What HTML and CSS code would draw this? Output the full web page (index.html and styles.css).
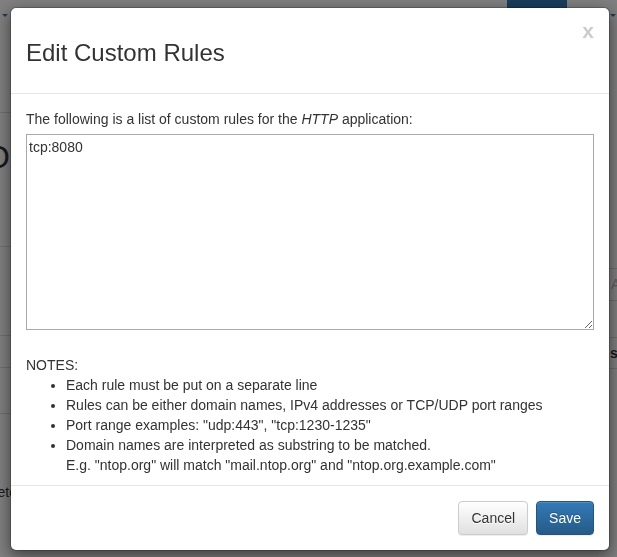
FILE: index.html
```html
<!DOCTYPE html>
<html lang="en">
<head>
<meta charset="utf-8">
<title>Edit Custom Rules</title>
<link rel="stylesheet" href="styles.css">
</head>
<body>
<div class="page">
  <div class="side side-left">
    <div class="blk l1"><span class="caret"></span></div>
    <div class="blk l2"><span class="big">O</span></div>
    <div class="blk l3"></div>
    <div class="blk l4"></div>
    <div class="blk l5"></div>
    <div class="l6">Complete</div>
  </div>
  <div class="middle">
    <div class="nav-btn"></div>
  </div>
  <div class="side side-right">
    <div class="blk r1"><span class="caret"></span></div>
    <div class="blk r2"><span class="ph">Ap</span></div>
    <div class="blk r3"></div>
    <div class="blk r4"><span class="bold">s</span></div>
  </div>
</div>

<div class="overlay">
  <div class="modal">
    <div class="modal-header">
      <span class="close">x</span>
      <h4 class="modal-title">Edit Custom Rules</h4>
    </div>
    <div class="modal-body">
      <p class="intro">The following is a list of custom rules for the <i>HTTP</i> application:</p>
      <textarea class="rules" spellcheck="false">tcp:8080</textarea>
      <div class="notes">
        NOTES:
        <ul>
          <li>Each rule must be put on a separate line</li>
          <li>Rules can be either domain names, IPv4 addresses or TCP/UDP port ranges</li>
          <li>Port range examples: "udp:443", "tcp:1230-1235"</li>
          <li>Domain names are interpreted as substring to be matched.<br>E.g. "ntop.org" will match "mail.ntop.org" and "ntop.org.example.com"</li>
        </ul>
      </div>
    </div>
    <div class="modal-footer">
      <button class="btn btn-default" type="button">Cancel</button>
      <button class="btn btn-primary" type="button">Save</button>
    </div>
  </div>
</div>
</body>
</html>
```

FILE: styles.css
```css
html, body {
  margin: 0;
  padding: 0;
}
body {
  background: #fff;
  font-family: "Liberation Sans", Arial, Helvetica, sans-serif;
  font-size: 14px;
  line-height: 20px;
  color: #333;
  overflow: hidden;
}

/* ---------- background page ---------- */
.page {
  display: flex;
  height: 557px;
  width: 617px;
}
.side {
  display: flex;
  flex-direction: column;
  overflow: hidden;
  flex: none;
}
.side-left { width: 40px; }
.side-right { width: 8px; }
.middle {
  flex: 1;
  display: flex;
  justify-content: flex-end;
  padding-right: 42px;
}
.nav-btn {
  width: 60px;
  height: 40px;
  background: #337ab7;
}
.blk {
  border-bottom: 1px solid #ddd;
  flex: none;
}
.caret {
  display: block;
  width: 0;
  height: 0;
  border-left: 3px solid transparent;
  border-right: 3px solid transparent;
  border-top: 3px solid #337ab7;
}
.l1 { height: 112px; }
.l1 .caret { margin: 14px 0 0 2px; }
.l2 { height: 133px; }
.big {
  display: block;
  font-size: 32px;
  line-height: 32px;
  margin: 28px 0 0 -15px;
  color: #333;
}
.l3 { height: 88px; }
.l4 { height: 31px; }
.l5 { height: 45px; }
.l6 {
  margin: 68px 0 0 -43px;
  white-space: nowrap;
  color: #333;
}
.r1 { height: 268px; }
.r1 .caret { margin: 14px 0 0 1px; }
.r2 { height: 31px; }
.ph {
  display: block;
  margin: 5px 0 0 2px;
  color: #bbb;
  white-space: nowrap;
}
.r3 { height: 36px; }
.r4 { height: 30px; }
.bold {
  display: block;
  margin: 5px 0 0 1px;
  font-weight: 700;
  color: #333;
}

/* ---------- overlay + modal ---------- */
.overlay {
  position: fixed;
  inset: 0;
  background: rgba(0, 0, 0, 0.5);
  padding: 7px 0 0 10px;
}
.modal {
  width: 600px;
  box-sizing: border-box;
  background: #fff;
  border: 1px solid rgba(0, 0, 0, 0.2);
  border-radius: 6px;
  box-shadow: 0 5px 15px rgba(0, 0, 0, 0.5);
  background-clip: padding-box;
}
.modal-header {
  padding: 15px;
  border-bottom: 1px solid #e5e5e5;
}
.close {
  float: right;
  margin-top: -3px;
  font-size: 21px;
  font-weight: 700;
  line-height: 21px;
  color: #000;
  opacity: 0.2;
  text-shadow: 0 1px 0 #fff;
}
.modal-title {
  margin: 17px 0 12px;
  font-size: 24px;
  font-weight: 400;
  line-height: 26px;
  color: #333;
}
.modal-body {
  padding: 15px 15px 10px;
}
.intro {
  margin: 0 0 5px;
}
.rules {
  display: block;
  box-sizing: border-box;
  width: 100%;
  height: 196px;
  margin: 0 0 25px;
  padding: 2px;
  border: 1px solid #a9a9a9;
  font-family: "Liberation Sans", Arial, Helvetica, sans-serif;
  font-size: 14px;
  line-height: 20px;
  color: #333;
  resize: both;
}
.notes ul {
  margin: 0;
  padding-left: 40px;
  list-style: disc;
}
.modal-footer {
  display: flex;
  justify-content: flex-end;
  gap: 8px;
  padding: 15px;
  border-top: 1px solid #e5e5e5;
}
.btn {
  box-sizing: border-box;
  height: 34px;
  padding: 6px 12px;
  font-family: "Liberation Sans", Arial, Helvetica, sans-serif;
  font-size: 14px;
  line-height: 20px;
  border: 1px solid transparent;
  border-radius: 4px;
  box-shadow: inset 0 1px 0 rgba(255, 255, 255, 0.15), 0 1px 1px rgba(0, 0, 0, 0.075);
}
.btn-default {
  color: #333;
  border-color: #ccc;
  background-image: linear-gradient(to bottom, #fff 0, #e0e0e0 100%);
  text-shadow: 0 1px 0 #fff;
}
.btn-primary {
  color: #fff;
  border-color: #245580;
  background-image: linear-gradient(to bottom, #337ab7 0, #265a88 100%);
  text-shadow: 0 -1px 0 rgba(0, 0, 0, 0.2);
}
```
